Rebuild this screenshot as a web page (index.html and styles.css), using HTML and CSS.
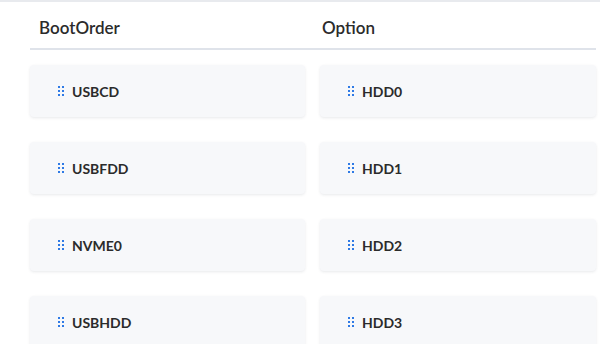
FILE: index.html
```html
<!DOCTYPE html>
<html lang="en">
<head>
  <meta charset="UTF-8">
  <title>Boot Order</title>
  <link rel="stylesheet" href="styles.css">
</head>
<body>
  <div class="panel">
    <div class="head">
      <div class="head-cell">BootOrder</div>
      <div class="head-cell">Option</div>
    </div>
    <div class="board">
      <div class="col">
        <div class="card"><span class="grip"><i></i><i></i><i></i><i></i><i></i><i></i></span>USBCD</div>
        <div class="card"><span class="grip"><i></i><i></i><i></i><i></i><i></i><i></i></span>USBFDD</div>
        <div class="card"><span class="grip"><i></i><i></i><i></i><i></i><i></i><i></i></span>NVME0</div>
        <div class="card"><span class="grip"><i></i><i></i><i></i><i></i><i></i><i></i></span>USBHDD</div>
      </div>
      <div class="col">
        <div class="card"><span class="grip"><i></i><i></i><i></i><i></i><i></i><i></i></span>HDD0</div>
        <div class="card"><span class="grip"><i></i><i></i><i></i><i></i><i></i><i></i></span>HDD1</div>
        <div class="card"><span class="grip"><i></i><i></i><i></i><i></i><i></i><i></i></span>HDD2</div>
        <div class="card"><span class="grip"><i></i><i></i><i></i><i></i><i></i><i></i></span>HDD3</div>
      </div>
    </div>
  </div>
</body>
</html>
```

FILE: styles.css
```css
body { margin: 0; font-family: Lato, "Liberation Sans", sans-serif; color: #2b2b2b; background: #fff; border-top: 2px solid #e8eaee; }
.panel { padding: 0 4px 0 30px; }
.head { display: grid; grid-template-columns: 1fr 1fr; border-bottom: 2px solid #dfe3ea; height: 46px; }
.head-cell { padding: 0 9px; font-size: 17px; font-weight: 600; line-height: 52px; height: 46px; }
.board { display: grid; grid-template-columns: 275px 276px; column-gap: 15px; padding-top: 15px; }
.col { display: flex; flex-direction: column; gap: 25px; }
.card { height: 52px; display: flex; align-items: center; padding-left: 28px; background: #f7f8fa; border-radius: 4px; box-shadow: 0 1px 3px rgba(30, 40, 60, 0.10); font-size: 14px; font-weight: 700; }
.grip { display: grid; grid-template-columns: 2px 2px; gap: 2px 2px; margin-right: 8px; }
.grip i { width: 2px; height: 2px; background: #2f7ae5; }
```
